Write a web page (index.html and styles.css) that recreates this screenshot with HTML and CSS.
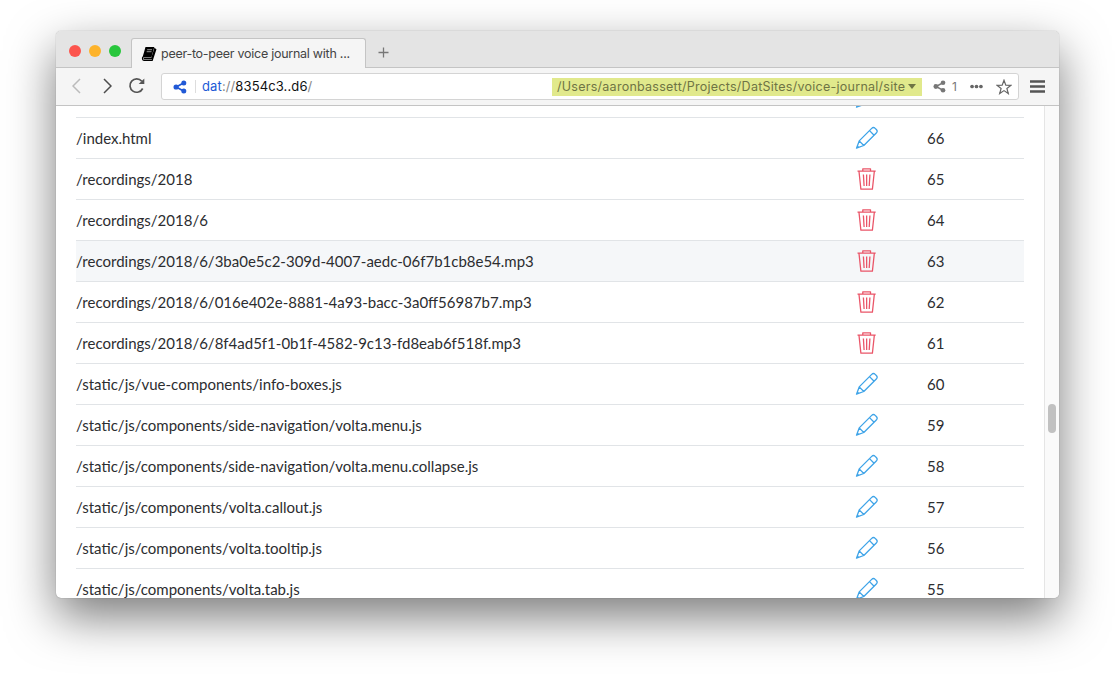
FILE: index.html
```html
<!DOCTYPE html>
<html lang="en">
<head>
<meta charset="utf-8">
<title>peer-to-peer voice journal</title>
<link rel="stylesheet" href="styles.css">
</head>
<body>
<svg width="0" height="0" class="defs">
  <symbol id="pencil" viewBox="0 0 24 24"><path d="M1.500 22.200 4.200 14.900 16.700 2.400c1-1 2.500-1 3.500 0l1.100 1.100c1 1 1 2.500 0 3.500L8.800 19.500zM4.200 14.900l4.600 4.600M14.500 4.600l4.600 4.600M1.500 22.200l2-2"/></symbol>
  <symbol id="trash" viewBox="0 0 24 24"><path d="M2.500 4.200h18.200M7.800 4V1.800h7.700V4M4 4.500 5.900 22.200h11.500L19.300 4.500M8.400 7.500l.7 11.500M11.650 7.500V19M14.900 7.500l-.7 11.500"/></symbol>
  <symbol id="share" viewBox="0 0 14 14"><path d="M11 2.800 3.200 7l7.800 4.200" fill="none" stroke="currentColor" stroke-width="1.700"/><circle cx="3.100" cy="7" r="2.600"/><circle cx="10.800" cy="3" r="2.500"/><circle cx="10.800" cy="11" r="2.500"/></symbol>
</svg>
<div class="window">
  <header class="tabs">
    <div class="lights"><i class="red"></i><i class="amber"></i><i class="green"></i></div>
    <div class="tab">
      <svg class="book" viewBox="0 0 16 16"><path d="M4.500 1H13.300l-2.900 10.500H1.500z" fill="#000"/><path d="M2 11c-1 1-.6 3.400 1 3.400h8.200L14.900 3M2.600 12.600h8L14 2" fill="none" stroke="#000" stroke-width="1.200"/><path d="M6.200 3.700h4.800M5.700 5.700h4.800" stroke="#bbb" stroke-width=".8"/></svg>
      <span class="title">peer-to-peer voice journal with ...</span>
    </div>
    <svg class="plus" viewBox="0 0 11 11"><path d="M5.500.5v10M.5 5.500h10"/></svg>
  </header>
  <nav class="toolbar">
    <svg class="chev back" viewBox="0 0 9 16"><path d="M8 1 1 8l7 7"/></svg>
    <svg class="chev" viewBox="0 0 9 16"><path d="m1 1 7 7-7 7"/></svg>
    <svg class="reload" viewBox="0 0 18 18"><path d="M14.700 11.500A6.700 6.700 0 1 1 13.800 4.200" fill="none" stroke="#555" stroke-width="1.700"/><path d="M16.300 1.500v5.600h-5.600z" fill="#555"/></svg>
    <div class="address">
      <svg class="dat"><use href="#share"/></svg>
      <span class="url"><b>dat</b><i>://</i>8354c3..d6<i>/</i></span>
      <span class="path"><span class="pathtext">/Users/aaronbassett/Projects/DatSites/voice-journal/site</span><i class="caret"></i></span>
      <svg class="peers" viewBox="0 0 14 14"><use href="#share"/></svg><span class="count">1</span>
      <svg class="dots" viewBox="0 0 12 4"><circle cx="1.900" cy="2" r="1.700"/><circle cx="6" cy="2" r="1.700"/><circle cx="10.100" cy="2" r="1.700"/></svg>
      <svg class="star" viewBox="0 0 16 16"><path d="m8 1.200 1.800 4.900 5.200.2-4.100 3.200 1.400 5L8 11.600l-4.300 2.900 1.400-5L1 6.300l5.200-.2z"/></svg>
    </div>
    <svg class="menu" viewBox="0 0 15 13"><path d="M0 1.500h15M0 6.500h15M0 11.500h15"/></svg>
  </nav>
  <main class="page">
    <div class="files">
      <div class="row cut"><span></span><svg class="icon edit"><use href="#pencil"/></svg><span></span></div>
      <div class="row"><span class="name">/index.html</span><svg class="icon edit"><use href="#pencil"/></svg><span>66</span></div>
      <div class="row"><span class="name">/recordings/2018</span><svg class="icon del"><use href="#trash"/></svg><span>65</span></div>
      <div class="row"><span class="name">/recordings/2018/6</span><svg class="icon del"><use href="#trash"/></svg><span>64</span></div>
      <div class="row hover"><span class="name">/recordings/2018/6/3ba0e5c2-309d-4007-aedc-06f7b1cb8e54.mp3</span><svg class="icon del"><use href="#trash"/></svg><span>63</span></div>
      <div class="row"><span class="name">/recordings/2018/6/016e402e-8881-4a93-bacc-3a0ff56987b7.mp3</span><svg class="icon del"><use href="#trash"/></svg><span>62</span></div>
      <div class="row"><span class="name">/recordings/2018/6/8f4ad5f1-0b1f-4582-9c13-fd8eab6f518f.mp3</span><svg class="icon del"><use href="#trash"/></svg><span>61</span></div>
      <div class="row"><span class="name">/static/js/vue-components/info-boxes.js</span><svg class="icon edit"><use href="#pencil"/></svg><span>60</span></div>
      <div class="row"><span class="name">/static/js/components/side-navigation/volta.menu.js</span><svg class="icon edit"><use href="#pencil"/></svg><span>59</span></div>
      <div class="row"><span class="name">/static/js/components/side-navigation/volta.menu.collapse.js</span><svg class="icon edit"><use href="#pencil"/></svg><span>58</span></div>
      <div class="row"><span class="name">/static/js/components/volta.callout.js</span><svg class="icon edit"><use href="#pencil"/></svg><span>57</span></div>
      <div class="row"><span class="name">/static/js/components/volta.tooltip.js</span><svg class="icon edit"><use href="#pencil"/></svg><span>56</span></div>
      <div class="row"><span class="name">/static/js/components/volta.tab.js</span><svg class="icon edit"><use href="#pencil"/></svg><span>55</span></div>
    </div>
    <div class="scroll"><div class="thumb"></div></div>
  </main>
</div>
</body>
</html>
```
FILE: styles.css
```css
* { box-sizing: border-box; }
html, body { margin: 0; height: 100%; overflow: hidden; background: #fff; }
body { padding: 31px 0 0 56px; font-family: Inter, "Liberation Sans", sans-serif; }
.defs { position: absolute; }
svg { display: block; flex: none; }
.window { width: 1003px; height: 567px; display: flex; flex-direction: column; overflow: hidden; border-radius: 5px; background: #fff; box-shadow: 0 0 1px rgba(0,0,0,.45), 0 19px 48px rgba(0,0,0,.52); }
.tabs { height: 37px; flex: none; display: flex; align-items: flex-end; background: #e4e4e4; box-shadow: inset 0 -1px #c4c4c4; }
.lights { display: flex; gap: 8px; padding: 0 10px 11px 13px; }
.lights i { width: 12px; height: 12px; border-radius: 50%; }
.red { background: #fc544d; }
.amber { background: #fdb32b; }
.green { background: #28c63c; }
.tab { width: 235px; height: 30px; display: flex; align-items: center; padding-left: 9px; background: #f5f5f5; border: 1px solid #c4c4c4; border-bottom: 0; border-radius: 3px 3px 0 0; }
.book { width: 16px; height: 16px; }
.title { margin-left: 4px; font-size: 12.500px; letter-spacing: -.26px; color: #444; white-space: nowrap; }
.plus { width: 11px; height: 11px; margin: 0 0 10px 12px; fill: none; stroke: #777; stroke-width: 1.300; }
.toolbar { height: 38px; flex: none; display: flex; align-items: center; padding-left: 16px; background: #f5f5f5; border-bottom: 1px solid #c4c4c4; }
.chev { width: 9px; height: 16px; margin-bottom: 2px; fill: none; stroke: #4d4d4d; stroke-width: 1.500; }
.back { stroke: #bbb; margin-right: 22px; }
.reload { width: 18px; height: 18px; margin: 0 0 2px 16px; }
.address { width: 858px; height: 27px; margin-left: 15px; display: flex; align-items: center; background: #fff; border: 1px solid #d4d4d4; border-radius: 3px; }
.dat { width: 14px; height: 14px; margin-left: 11px; color: #2159d6; fill: currentColor; }
.url { width: 356px; height: 13px; line-height: 13px; margin-left: 8px; padding-left: 6px; border-left: 1px solid #ddd; font-size: 13px; letter-spacing: .12px; color: #111; }
.url b { font-weight: 400; color: #2159d6; }
.url i { font-style: normal; color: #888; }
.path { width: 370px; height: 18px; margin-left: 1px; padding-left: 5px; display: flex; align-items: center; background: #e1e98c; color: #6f7444; font-size: 12.500px; letter-spacing: .26px; white-space: nowrap; }
.pathtext { width: 351px; }
.caret { border: 4px solid transparent; border-top: 5px solid #6f7444; border-bottom: 0; }
.peers { width: 13px; height: 13px; margin-left: 11px; color: #777; fill: currentColor; }
.count { width: 18px; margin-left: 6px; font-size: 12px; color: #777; }
.dots { width: 13px; height: 5px; fill: #666; }
.star { width: 16px; height: 16px; margin-left: 13px; fill: none; stroke: #666; stroke-width: 1.200; }
.menu { width: 15px; height: 13px; margin: 0 0 1px 11px; stroke: #555; stroke-width: 2.400; }
.page { flex: 1; min-height: 0; display: flex; overflow: hidden; }
.files { width: 948px; margin-left: 20px; margin-top: -29px; flex: none; }
.row { height: 41px; display: grid; grid-template-columns: 779px 72px 1fr; align-items: center; border-bottom: 1px solid #e1e4e7; font: 15px/20px Lato, sans-serif; color: #2c2d30; }
.name { white-space: nowrap; }
.hover { background: #f5f7f9; }
.icon { width: 24px; height: 24px; fill: none; stroke-width: 1.300; stroke-linejoin: round; }
.edit { stroke: #3fa4e8; }
.del { stroke: #ea5568; }
.scroll { width: 15px; margin-left: 20px; flex: none; background: #fafafa; border-left: 1px solid #e5e5e5; padding: 298px 0 0 3px; }
.thumb { width: 8px; height: 29px; border-radius: 4px; background: #c1c1c1; }
```
